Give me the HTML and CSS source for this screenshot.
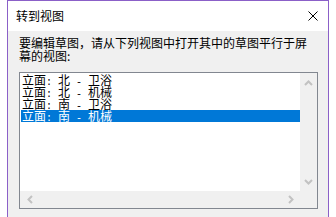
FILE: index.html
```html
<!DOCTYPE html>
<html>
<head>
<meta charset="utf-8">
<link rel="stylesheet" href="styles.css">
</head>
<body>
<div class="window">
  <div class="titlebar">
    <span class="title">转到视图</span>
    <svg class="close" width="10" height="10" viewBox="0 0 10 10"><path d="M0.5 0.5L9.5 9.5M9.5 0.5L0.5 9.5" stroke="#000" stroke-width="1" fill="none"/></svg>
  </div>
  <div class="content">
    <p class="prompt">要编辑草图，请从下列视图中打开其中的草图平行于屏幕的视图:</p>
    <div class="listbox">
      <ul class="items">
        <li>立面<span class="sep">: </span>北<span class="sep"> - </span>卫浴</li>
        <li>立面<span class="sep">: </span>北<span class="sep"> - </span>机械</li>
        <li>立面<span class="sep">: </span>南<span class="sep"> - </span>卫浴</li>
        <li class="selected">立面<span class="sep">: </span>南<span class="sep"> - </span>机械</li>
      </ul>
      <div class="vscroll">
        <svg width="9" height="6" viewBox="0 0 9 6"><path d="M1 5L4.5 1.5L8 5" stroke="#c2c2c2" stroke-width="2" fill="none"/></svg>
        <svg width="9" height="6" viewBox="0 0 9 6"><path d="M1 1L4.5 4.5L8 1" stroke="#c2c2c2" stroke-width="2" fill="none"/></svg>
      </div>
      <div class="hscroll">
        <svg width="6" height="9" viewBox="0 0 6 9"><path d="M5 1L1.5 4.5L5 8" stroke="#c2c2c2" stroke-width="2" fill="none"/></svg>
        <svg width="6" height="9" viewBox="0 0 6 9"><path d="M1 1L4.5 4.5L1 8" stroke="#c2c2c2" stroke-width="2" fill="none"/></svg>
      </div>
      <div class="corner"></div>
    </div>
  </div>
</div>
</body>
</html>
```
FILE: styles.css
```css
html, body {
  margin: 0;
  padding: 0;
  background: #ffffff;
  overflow: hidden;
}
body {
  font-family: "Noto Sans CJK SC", "Noto Sans", sans-serif;
  font-size: 12px;
  color: #000;
}
.window {
  margin-left: 7px;
  width: 320px;
  height: 216px;
  border: 1px solid #8b60c8;
  border-bottom: none;
  background: #f0f0f0;
  display: flex;
  flex-direction: column;
}
.titlebar {
  height: 30px;
  background: #ffffff;
  display: flex;
  align-items: center;
  justify-content: space-between;
  padding: 0 10px 0 8px;
}
.title {
  font-size: 12px;
  line-height: 14px;
  margin-top: -1px;
}
.close {
  display: block;
}
.content {
  padding: 5px 11px 0 11px;
}
.prompt {
  margin: 0;
  font-size: 12px;
  line-height: 13px;
  height: 26px;
}
.listbox {
  margin-top: 10px;
  width: 297px;
  height: 135px;
  border: 1px solid #828790;
  background: #ffffff;
  display: grid;
  grid-template-columns: 1fr 17px;
  grid-template-rows: 1fr 17px;
}
.items {
  list-style: none;
  margin: 0;
  padding: 1px 0 0 1px;
}
.items li {
  height: 12px;
  line-height: 12px;
  font-size: 12px;
  padding-left: 1px;
  white-space: nowrap;
}
.items li.selected {
  background: #0078d7;
  color: #ffffff;
}
.sep {
  font-family: "Liberation Mono", monospace;
  font-size: 10px;
  white-space: pre;
}
.vscroll {
  background: #f0f0f0;
  display: flex;
  flex-direction: column;
  justify-content: space-between;
  align-items: center;
  padding: 7px 0 6px;
}
.hscroll {
  background: #f0f0f0;
  display: flex;
  justify-content: space-between;
  align-items: center;
  padding: 0 6px 0 7px;
}
.corner {
  background: #f0f0f0;
}
svg {
  display: block;
}
```
